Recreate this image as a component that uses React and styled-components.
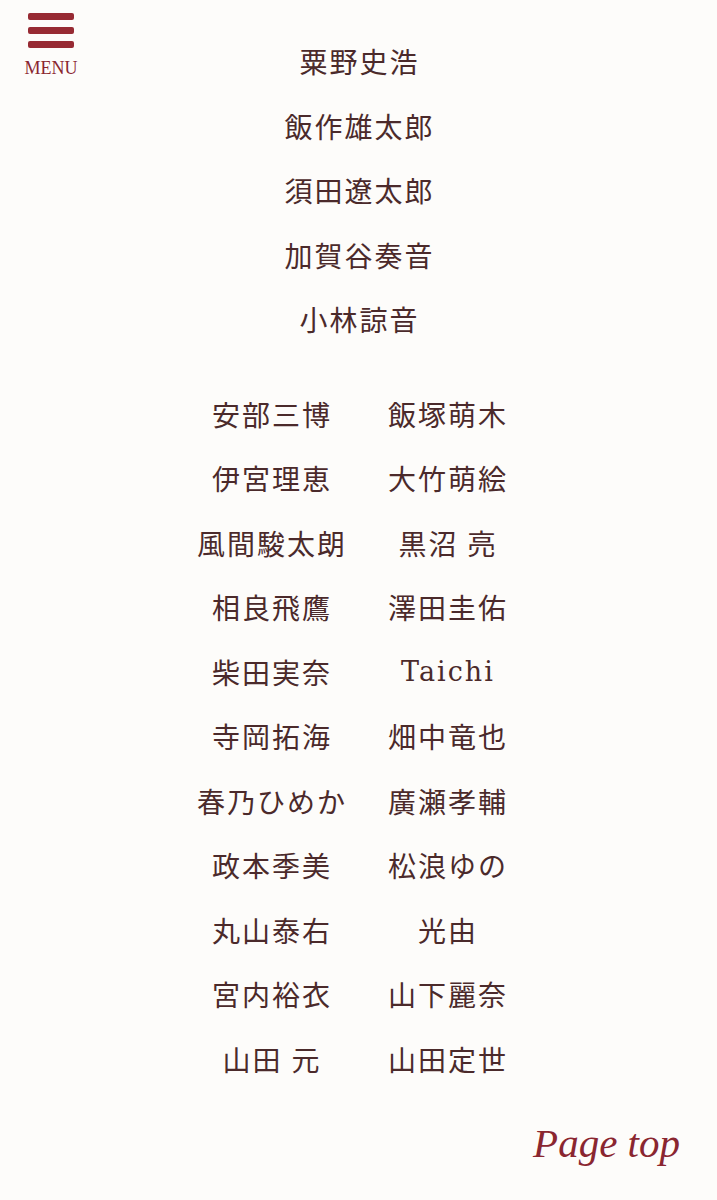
import React from "react"
import styled, { createGlobalStyle } from "styled-components"

const GlobalStyle = createGlobalStyle`
  html, body {
    margin: 0;
    padding: 0;
    background: #fdfcfa;
  }
  body {
    font-family: "Liberation Serif", "Noto Sans CJK JP", serif;
    color: #4b2a2b;
  }
`

const Page = styled.div`
  position: relative;
  width: 717px;
  min-height: 1200px;
  padding-top: 29px;
  box-sizing: border-box;
`

const MenuButton = styled.button`
  position: absolute;
  top: 13px;
  left: 25px;
  width: 52px;
  display: flex;
  flex-direction: column;
  align-items: center;
  gap: 7px;
  background: none;
  border: 0;
  padding: 0;
  cursor: pointer;
`

const Bar = styled.span`
  display: block;
  width: 46px;
  height: 7px;
  border-radius: 2px;
  background: #972a33;
`

const MenuLabel = styled.span`
  margin-top: 3px;
  font-family: "Liberation Serif", serif;
  font-size: 18px;
  color: #8a2630;
`

const SingleList = styled.ul`
  list-style: none;
  margin: 0;
  padding: 0;
  display: flex;
  flex-direction: column;
  align-items: center;
`

const Name = styled.li`
  height: 64.5px;
  display: flex;
  align-items: center;
  justify-content: center;
  letter-spacing: 2px;
  margin-right: -2px;
  white-space: nowrap;
  font-family: ${(p) => (p.$latin ? '"DejaVu Serif", serif' : '"Liberation Serif", "Noto Sans CJK JP", serif')};
  font-size: ${(p) => (p.$latin ? "27px" : "28px")};
`

const PairGrid = styled.ul`
  list-style: none;
  margin: 30px auto 0;
  padding: 0;
  width: 352px;
  display: grid;
  grid-template-columns: 1fr 1fr;
  transform: translateX(0.5px);
`

const PageTop = styled.a`
  display: block;
  text-align: right;
  margin: 28px 37px 0 0;
  font-family: "Liberation Serif", serif;
  font-style: italic;
  font-size: 41px;
  color: #8a2630;
  text-decoration: none;
`

const leads = ["粟野史浩", "飯作雄太郎", "須田遼太郎", "加賀谷奏音", "小林諒音"]

const pairs = [
  ["安部三博", "飯塚萌木"],
  ["伊宮理恵", "大竹萌絵"],
  ["風間駿太朗", "黒沼 亮"],
  ["相良飛鷹", "澤田圭佑"],
  ["柴田実奈", "Taichi"],
  ["寺岡拓海", "畑中竜也"],
  ["春乃ひめか", "廣瀬孝輔"],
  ["政本季美", "松浪ゆの"],
  ["丸山泰右", "光由"],
  ["宮内裕衣", "山下麗奈"],
  ["山田 元", "山田定世"],
]

const App = () => (
  <Page>
    <GlobalStyle />
    <MenuButton aria-label="menu">
      <Bar />
      <Bar />
      <Bar />
      <MenuLabel>MENU</MenuLabel>
    </MenuButton>

    <SingleList>
      {leads.map((n) => (
        <Name key={n}>{n}</Name>
      ))}
    </SingleList>

    <PairGrid>
      {pairs.flat().map((n) => (
        <Name key={n} $latin={/^[A-Za-z]+$/.test(n)}>
          {n}
        </Name>
      ))}
    </PairGrid>

    <PageTop href="#">Page top</PageTop>
  </Page>
)

export default App
